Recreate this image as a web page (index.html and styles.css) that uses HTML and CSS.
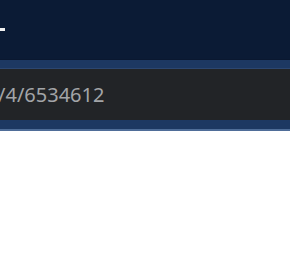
FILE: index.html
```html
<!DOCTYPE html>
<html lang="en">
<head>
    <meta charset="UTF-8">
    <title>Viewer</title>
    <link rel="stylesheet" href="styles.css">
</head>
<body>
    <div class="topbar">
        <span class="menu-dash"></span>
    </div>
    <div class="band band-top"></div>
    <div class="address">
        <span class="path">/4/6534612</span>
    </div>
    <div class="band band-bottom"></div>
    <div class="page"></div>
</body>
</html>
```

FILE: styles.css
```css
body {
    margin: 0;
    font-family: "Noto Sans", "Open Sans", sans-serif;
    background-color: #ffffff;
}

.topbar {
    height: 59px;
    background-color: #0b1b35;
    border-bottom: 1px solid #0a1830;
    display: flex;
    align-items: center;
}

.menu-dash {
    display: block;
    width: 5px;
    height: 3px;
    margin-top: -1px;
    background-color: #f0f0f0;
}

.band {
    background-color: #1d3862;
}

.band-top {
    height: 8px;
    border-bottom: 1px solid #2c4670;
}

.band-bottom {
    height: 9px;
    border-bottom: 2px solid #4f6d98;
}

.address {
    height: 51px;
    background-color: #222427;
    display: flex;
    align-items: center;
}

.path {
    margin-left: -2px;
    font-size: 20px;
    color: #a3a5a8;
}

.page {
    height: 140px;
}
```
